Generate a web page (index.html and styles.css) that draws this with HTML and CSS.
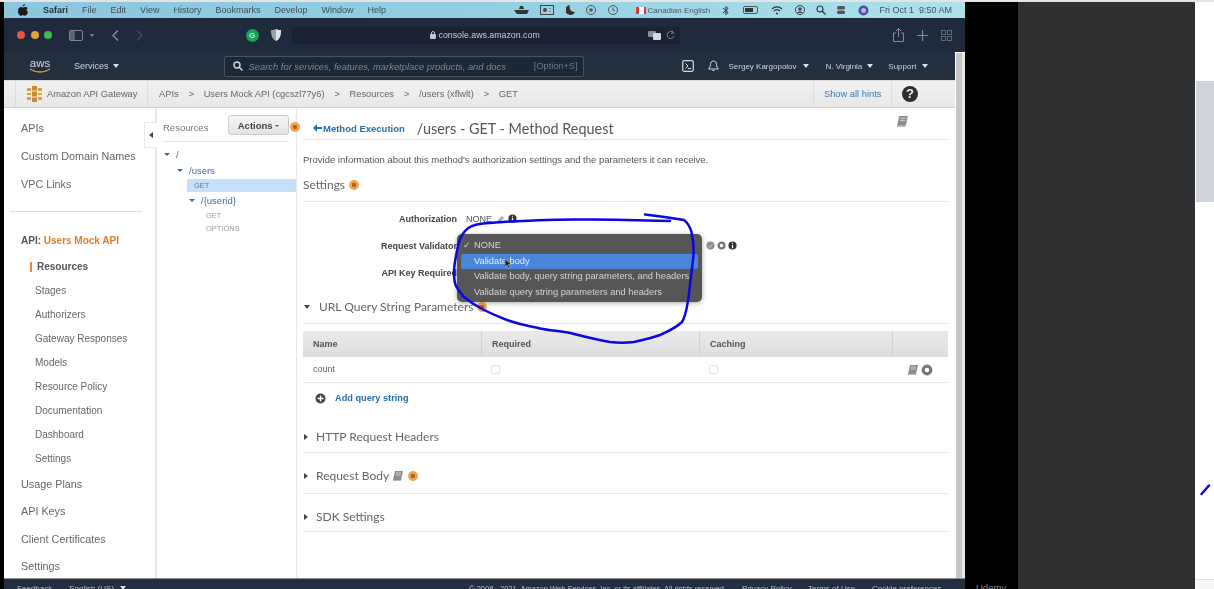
FILE: index.html
```html
<!DOCTYPE html>
<html lang="en">
<head>
    <meta charset="UTF-8">
    <meta name="viewport" content="width=device-width, initial-scale=1.0">
    <title>API Gateway - Method Request</title>
    <link rel="stylesheet" href="styles.css">
</head>
<body>

<svg class="defs" width="0" height="0">
    <symbol id="book" viewBox="0 0 12 12">
        <path d="M3 1h8l-2 9H1z" fill="#8d8d8d"/>
        <path d="M1 10h8v1H1z" fill="#bbb"/>
        <path d="M4 3h5M3.6 5h5" stroke="#ddd" stroke-width=".8"/>
    </symbol>
    <symbol id="info" viewBox="0 0 10 10">
        <circle cx="5" cy="5" r="4.5" fill="#333"/>
        <path d="M5 2v1M5 4.3V8" stroke="#fff" stroke-width="1.3"/>
    </symbol>
    <symbol id="ring" viewBox="0 0 10 10">
        <circle cx="5" cy="5" r="3.2" fill="none" stroke="#777" stroke-width="2.6"/>
    </symbol>
</svg>

<div class="top-strip"></div>
<div class="screen">
    <div class="edge"></div>

    <div class="frame">
        <div class="menubar">
            <svg class="apple" width="10" height="12" viewBox="0 0 10 12"><path d="M7 0c0 1.4-1 2.6-2.3 2.5C4.600 1.200 5.800.1 7 0zM9.700 4.100C8.200 5 8.300 7.400 10 8.100 9.500 9.600 8.400 11.800 7.200 11.800c-.9 0-1.200-.6-2.300-.6s-1.400.6-2.300.6C1.300 11.800 0 9.300 0 7c0-2.400 1.500-3.900 3-3.900 1 0 1.600.6 2.200.6.600 0 1.300-.7 2.500-.6.900 0 1.600.4 2 1z" fill="#1c1c1c"/></svg>
            <b class="menu-app">Safari</b>
            <span>File</span><span>Edit</span><span>View</span><span>History</span><span>Bookmarks</span><span>Develop</span><span>Window</span><span>Help</span>
            <div class="menu-right">
                <svg width="15" height="10" viewBox="0 0 15 10"><path d="M0 5h15l-2 4H3zM6 1h3l1 3H5z" fill="#333"/></svg>
                <svg class="mi-11" width="14" height="10" viewBox="0 0 14 10"><rect x=".5" y=".5" width="13" height="9" fill="none" stroke="#444"/><circle cx="5" cy="5" r="2" fill="#444"/><path d="M10 3v1M10 6v1" stroke="#444"/></svg>
                <svg class="mi-12" width="9" height="10" viewBox="0 0 9 10"><path d="M4 0a5 5 0 1 0 5 7A5 5 0 0 1 4 0z" fill="#333"/></svg>
                <svg class="mi-11" width="10" height="10" viewBox="0 0 10 10"><circle cx="5" cy="5" r="4.5" fill="none" stroke="#555"/><circle cx="5" cy="5" r="1.8" fill="#555"/></svg>
                <svg class="mi-12" width="10" height="10" viewBox="0 0 10 10"><circle cx="5" cy="5" r="4.5" fill="none" stroke="#555"/><path d="M5 2.500V5l2 1" fill="none" stroke="#555"/></svg>
                <span class="flag"></span>
                <span class="keyboard">Canadian English</span>
                <svg class="mi-14" width="6" height="11" viewBox="0 0 6 11"><path d="M0 3l5 4.500L3 9.500v-8l2 2L0 8" fill="none" stroke="#333"/></svg>
                <svg class="mi-14" width="17" height="8" viewBox="0 0 17 8"><rect x=".5" y=".5" width="14" height="7" rx="1.5" fill="none" stroke="#555"/><rect x="2" y="2" width="8" height="4" fill="#333"/></svg>
                <svg class="mi-11" width="12" height="9" viewBox="0 0 12 9"><path d="M1 3a7 7 0 0 1 10 0M3 5a4 4 0 0 1 6 0" fill="none" stroke="#333" stroke-width="1.2"/><circle cx="6" cy="7.5" r="1" fill="#333"/></svg>
                <svg class="mi-12" width="10" height="10" viewBox="0 0 10 10"><circle cx="5" cy="5" r="4.5" fill="none" stroke="#444"/><circle cx="5" cy="4" r="1.8" fill="#444"/><path d="M2 8a3.500 3.500 0 0 1 6 0" fill="#444"/></svg>
                <svg class="mi-11" width="10" height="10" viewBox="0 0 10 10"><circle cx="4" cy="4" r="3" fill="none" stroke="#333" stroke-width="1.2"/><path d="M6 6l3.500 3.500" stroke="#333" stroke-width="1.2"/></svg>
                <svg class="mi-10" width="10" height="10" viewBox="0 0 10 10"><rect x="1" y="1" width="8" height="3.5" rx="1.5" fill="#555"/><rect x="1" y="5.5" width="8" height="3.5" rx="1.5" fill="#555"/></svg>
                <svg class="mi-12" width="11" height="11" viewBox="0 0 11 11"><circle cx="5.5" cy="5.5" r="5" fill="#3557b5"/><circle cx="5.5" cy="5.5" r="2.5" fill="#e8a0b0"/></svg>
                <span class="clock">Fri Oct 1 &nbsp;9:50 AM</span>
            </div>
        </div>

        <div class="toolbar">
            <i class="light red"></i><i class="light yellow"></i><i class="light green"></i>
            <svg class="tb-side" width="14" height="11" viewBox="0 0 14 11"><rect x=".5" y=".5" width="13" height="10" rx="1.5" fill="none" stroke="#7d8591"/><path d="M5 1v9" stroke="#7d8591"/><rect x="1" y="1" width="4" height="9" fill="#5c6571"/></svg>
            <i class="tb-caret"></i>
            <svg class="tb-back" width="7" height="11" viewBox="0 0 7 11"><path d="M6 .5l-5 5 5 5" fill="none" stroke="#8b93a0" stroke-width="1.3"/></svg>
            <svg class="tb-fwd" width="7" height="11" viewBox="0 0 7 11"><path d="M1 .5l5 5-5 5" fill="none" stroke="#444e5e" stroke-width="1.3"/></svg>
            <span class="grammarly">G</span>
            <svg class="tb-shield" width="10" height="12" viewBox="0 0 10 12"><path d="M5 0c2 1 3 1 5 1 0 5-1 9-5 11C1 10 0 6 0 1c2 0 3 0 5-1z" fill="#9aa1ab"/><path d="M5 0c2 1 3 1 5 1 0 5-1 9-5 11z" fill="#dfe2e6"/></svg>
            <div class="address">
                <svg width="6" height="8" viewBox="0 0 6 8"><rect y="3" width="6" height="5" rx="1" fill="#c4c8ce"/><path d="M1.500 3V2a1.500 1.500 0 0 1 3 0v1" fill="none" stroke="#c4c8ce"/></svg>
                <span class="url">console.aws.amazon.com</span>
                <svg class="addr-tr" width="13" height="9" viewBox="0 0 13 9"><rect width="8" height="6" rx="1" fill="#8a909a"/><rect x="5" y="2" width="8" height="7" rx="1" fill="#d6d9dd"/></svg>
                <svg class="addr-re" width="9" height="10" viewBox="0 0 9 10"><path d="M7.500 3a3.500 3.500 0 1 0 .5 3M6 .5l1.500 2.500L5 3.500" fill="none" stroke="#7d8591"/></svg>
            </div>
            <svg class="tb-share" width="11" height="14" viewBox="0 0 11 14"><path d="M3 5H.5v8.500h10V5H8M5.500 9V.5M3 3l2.500-2.500L8 3" fill="none" stroke="#848c98"/></svg>
            <svg class="tb-plus" width="11" height="11" viewBox="0 0 11 11"><path d="M5.500 0v11M0 5.500h11" stroke="#848c98" stroke-width="1.2"/></svg>
            <svg class="tb-grid" width="11" height="11" viewBox="0 0 11 11"><g fill="none" stroke="#5f6875"><rect x=".5" y=".5" width="4" height="4"/><rect x="6.5" y=".5" width="4" height="4"/><rect x=".5" y="6.5" width="4" height="4"/><rect x="6.5" y="6.5" width="4" height="4"/></g></svg>
        </div>

        <div class="page">
            <div class="page-col">
                <div class="awsnav">
                    <div class="aws-logo">aws<svg width="22" height="5" viewBox="0 0 22 5"><path d="M1 1c6 4 14 4 20 0" fill="none" stroke="#e8962e" stroke-width="1.3"/></svg></div>
                    <span class="nav-services">Services</span><i class="nav-caret"></i>
                    <div class="nav-search">
                        <svg width="10" height="10" viewBox="0 0 10 10"><circle cx="4" cy="4" r="3" fill="none" stroke="#d5d8dc" stroke-width="1.4"/><path d="M6.300 6.300L9.500 9.500" stroke="#d5d8dc" stroke-width="1.5"/></svg>
                        <em>Search for services, features, marketplace products, and docs</em>
                        <span>[Option+S]</span>
                    </div>
                    <svg class="nav-shell" width="12" height="12" viewBox="0 0 12 12"><rect x=".7" y=".7" width="10.6" height="10.6" rx="1.5" fill="none" stroke="#d5d8dc" stroke-width="1.2"/><path d="M3.500 3.500L6 6 3.500 8.500M6 8.500h3" fill="none" stroke="#d5d8dc"/></svg>
                    <svg class="nav-bell" width="11" height="12" viewBox="0 0 11 12"><path d="M5.500 1C3.500 1 2.500 2.500 2.500 4.500c0 2-1 3.500-2 4.500h10c-1-1-2-2.500-2-4.500C8.500 2.500 7.500 1 5.500 1z" fill="none" stroke="#d5d8dc"/><path d="M4.500 10.500h2" stroke="#d5d8dc"/></svg>
                    <span class="nav-user">Sergey Kargopolov</span><i class="nav-caret"></i>
                    <span class="nav-region">N. Virginia</span><i class="nav-caret"></i>
                    <span class="nav-support">Support</span><i class="nav-caret"></i>
                </div>

                <div class="crumbs">
                    <div class="crumb-service">
                        <svg width="15" height="16" viewBox="0 0 15 16"><path d="M5 0h5v16H5z" fill="#c98a2e"/><path d="M0 2h4v3H0zM11 2h4v3h-4zM0 7h4v2H0zM11 7h4v2h-4zM0 11h4v3H0zM11 11h4v3h-4z" fill="#d9a04a"/><path d="M5 5h5M5 11h5" stroke="#f3e3c4"/></svg>
                        <span>Amazon API Gateway</span>
                    </div>
                    <div class="crumb-path">
                        <span>APIs</span><s>&gt;</s><span>Users Mock API (cgcszl77y6)</span><s>&gt;</s><span>Resources</span><s>&gt;</s><span>/users (xflwlt)</span><s>&gt;</s><span>GET</span>
                    </div>
                    <a class="hints">Show all hints</a>
                    <div class="help">?</div>
                </div>

                <div class="content">
                    <nav class="sidebar">
                        <a class="side-main">APIs</a>
                        <a class="side-main">Custom Domain Names</a>
                        <a class="side-main side-vpc">VPC Links</a>
                        <hr class="side-rule">
                        <div class="side-api">API: <span>Users Mock API</span></div>
                        <a class="side-sub active">Resources</a>
                        <a class="side-sub">Stages</a>
                        <a class="side-sub">Authorizers</a>
                        <a class="side-sub">Gateway Responses</a>
                        <a class="side-sub">Models</a>
                        <a class="side-sub">Resource Policy</a>
                        <a class="side-sub">Documentation</a>
                        <a class="side-sub">Dashboard</a>
                        <a class="side-sub">Settings</a>
                        <a class="side-main side-tail">Usage Plans</a>
                        <a class="side-main side-tail">API Keys</a>
                        <a class="side-main side-tail">Client Certificates</a>
                        <a class="side-main side-tail">Settings</a>
                        <div class="collapse-tab"></div>
                    </nav>

                    <div class="resources">
                        <div class="res-head">
                            <span>Resources</span>
                            <button class="actions">Actions <i></i></button>
                            <i class="badge res-badge"></i>
                        </div>
                        <div class="tree tree-root"><i class="tri"></i>/</div>
                        <div class="tree tree-users"><i class="tri"></i>/users</div>
                        <div class="tree-method selected">GET</div>
                        <div class="tree tree-id"><i class="tri"></i>/{userid}</div>
                        <div class="tree-method sub">GET</div>
                        <div class="tree-method sub muted">OPTIONS</div>
                    </div>

                    <main class="main">
                        <header class="main-head">
                            <a class="back"><svg width="9" height="8" viewBox="0 0 9 8"><path d="M4 0L0 4l4 4V5h5V3H4z" fill="#1f6fb2"/></svg>Method Execution</a>
                            <h1>/users - GET - Method Request</h1>
                            <svg class="head-book" width="13" height="13"><use href="#book"/></svg>
                        </header>
                        <p class="desc">Provide information about this method's authorization settings and the parameters it can receive.</p>

                        <h2 class="sec sec-settings">Settings <i class="badge"></i></h2>
                        <div class="form">
                            <div class="form-row">
                                <label>Authorization</label>
                                <span>NONE</span>
                                <svg class="pencil" width="8" height="8" viewBox="0 0 8 8"><path d="M0 8l1-3 4-4 2 2-4 4z" fill="#aaa"/></svg>
                                <svg width="9" height="9"><use href="#info"/></svg>
                            </div>
                            <div class="form-row">
                                <label>Request Validator</label>
                                <div class="row-icons">
                                    <svg width="9" height="9" viewBox="0 0 10 10"><circle cx="5" cy="5" r="4.5" fill="#8c8c8c"/><path d="M2.500 5l2 2 3-4" fill="none" stroke="#ccc"/></svg>
                                    <svg width="9" height="9"><use href="#ring"/></svg>
                                    <svg width="9" height="9"><use href="#info"/></svg>
                                </div>
                            </div>
                            <div class="form-row">
                                <label>API Key Required</label>
                            </div>
                        </div>

                        <h2 class="sec sec-url"><i class="tri-down"></i>URL Query String Parameters <i class="badge"></i></h2>

                        <div class="table">
                            <div class="t-row t-head">
                                <div class="c-name">Name</div>
                                <div class="c-req">Required</div>
                                <div class="c-cache">Caching</div>
                                <div class="c-tools"></div>
                            </div>
                            <div class="t-row t-body">
                                <div class="c-name">count</div>
                                <div class="c-req"><i class="check"></i></div>
                                <div class="c-cache"><i class="check"></i></div>
                                <div class="c-tools">
                                    <svg width="12" height="12"><use href="#book"/></svg>
                                    <svg width="12" height="12"><use href="#ring"/></svg>
                                </div>
                            </div>
                        </div>
                        <div class="add-row">
                            <svg width="11" height="11" viewBox="0 0 11 11"><circle cx="5.5" cy="5.5" r="5" fill="#444"/><path d="M5.500 2.500v6M2.500 5.500h6" stroke="#fff" stroke-width="1.4"/></svg>
                            <a>Add query string</a>
                        </div>

                        <h2 class="sec sec-fold sec-http"><i class="tri-right"></i>HTTP Request Headers</h2>
                        <h2 class="sec sec-fold sec-body"><i class="tri-right"></i>Request Body <svg width="12" height="12"><use href="#book"/></svg> <i class="badge"></i></h2>
                        <h2 class="sec sec-fold sec-sdk"><i class="tri-right"></i>SDK Settings</h2>

                        <div class="dropdown">
                            <div class="dd-item"><span class="tick">&#10003;</span>NONE</div>
                            <div class="dd-item on">Validate body</div>
                            <div class="dd-item">Validate body, query string parameters, and headers</div>
                            <div class="dd-item">Validate query string parameters and headers</div>
                            <svg class="pointer" width="7" height="10" viewBox="0 0 7 10"><path d="M0 0v8l2-2 1.500 3.500 1.500-.7L3.500 5.500H6.500z" fill="#222" stroke="#ccc" stroke-width=".5"/></svg>
                        </div>
                    </main>
                </div>
            </div>
            <div class="scrollbar"></div>
        </div>

        <footer class="footer">
            <span class="f-feedback">Feedback</span>
            <span class="f-lang">English (US)</span><i class="nav-caret"></i>
            <span class="f-copy">&copy; 2008 - 2021, Amazon Web Services, Inc. or its affiliates. All rights reserved.</span>
            <span class="f-privacy">Privacy Policy</span>
            <span class="f-terms">Terms of Use</span>
            <span>Cookie preferences</span>
        </footer>
    </div>

    <div class="black-col"><span>Udemy</span></div>
    <div class="gray-col"></div>
    <div class="side-col">
        <div class="sc-white"></div>
        <div class="sc-gray"></div>
        <div class="sc-low"></div>
        <div class="sc-foot"></div>
    </div>
</div>

<!-- pen marks drawn over the video -->
<svg class="ink" width="1214" height="589" viewBox="0 0 1214 589">
    <path d="M670 221C640 220 606 219 575 219.500C540 220 510 221 483 223.500C474 224.500 468 227 465 231C461 236 459 240 458 246C456 256 454 264 454 272C454 278 454 282 456 286C458 290 460 293 464 297C470 302 476 306 484 310C492 314 499 317 507 320C518 324 529 326 540 328.500C552 331 563 331 574 334C586 337 598 340 610 342C618 343 626 343 634 342C643 340 652 338 660 335C669 331 676 328 682 322C686 316 687 306 688.500 298C690 284 692 270 693.500 255C694 247 693 239 691.500 232C690 227 688 223 684 220C672 218 658 216 645 214.500" fill="none" stroke="#0808e0" stroke-width="2.5" stroke-linecap="round"/>
    <path d="M1201.500 494L1209 485.500" fill="none" stroke="#0808e0" stroke-width="2.5" stroke-linecap="round"/>
</svg>

</body>
</html>
```

FILE: styles.css
```css
* {
    box-sizing: border-box;
}
html, body {
    margin: 0;
    height: 589px;
    overflow: hidden;
}
body {
    position: relative;
    width: 1214px;
    background: #e4e4e4;
    font-family: "Liberation Sans", Arial, sans-serif;
    color: #555;
}
.defs {
    position: absolute;
}
.top-strip {
    height: 2px;
}
.screen {
    display: flex;
    height: 587px;
}
.edge {
    width: 4px;
    background: #000;
}

/* video frame */
.frame {
    width: 961px;
    display: flex;
    flex-direction: column;
    overflow: hidden;
    filter: blur(.45px);
    background: #fff;
}

.menubar {
    height: 16px;
    flex: none;
    display: flex;
    align-items: center;
    padding: 0 13px 0 14px;
    background: linear-gradient(90deg, #8cc6df, #93cfe2 50%, #aee2ea);
    font-size: 9px;
    color: #3d4f5b;
}
.menubar svg {
    flex: none;
}
.menubar > span {
    margin-right: 14px;
}
.menu-app {
    margin: 0 14px 0 15px;
    color: #26333c;
}
.menu-right {
    margin-left: auto;
    display: flex;
    align-items: center;
}
.mi-10 { margin-left: 10px; }
.mi-11 { margin-left: 11px; }
.mi-12 { margin-left: 12px; }
.mi-14 { margin-left: 14px; }
.flag {
    margin-left: 18px;
    width: 10px;
    height: 7px;
    background: linear-gradient(90deg, #d33 25%, #fff 25%, #fff 75%, #d33 75%);
}
.keyboard {
    margin-left: 1px;
    width: 62px;
    font-size: 8px;
    white-space: nowrap;
    color: #4a5a68;
}
.clock {
    margin-left: 10px;
    white-space: nowrap;
}

.toolbar {
    height: 34px;
    flex: none;
    display: flex;
    align-items: center;
    padding-left: 13px;
    background: #1f2a3d;
}
.light {
    width: 8px;
    height: 8px;
    border-radius: 50%;
    margin-right: 5.5px;
}
.red { background: #e8524a; }
.yellow { background: #e6a532; }
.green { background: #3dbb4c; }
.tb-side {
    margin-left: 11px;
}
.tb-caret {
    margin-left: 7px;
    border: 2.5px solid transparent;
    border-top: 3px solid #7d8591;
    border-bottom: 0;
}
.tb-back {
    margin-left: 18px;
}
.tb-fwd {
    margin-left: 17px;
}
.grammarly {
    margin-left: 103px;
    width: 13px;
    height: 13px;
    border-radius: 50%;
    background: #16a35a;
    color: #bff0d4;
    font-size: 8px;
    font-weight: bold;
    text-align: center;
    line-height: 13px;
}
.tb-shield {
    margin-left: 12px;
}
.address {
    margin-left: 11px;
    width: 388px;
    height: 17px;
    display: flex;
    align-items: center;
    padding-left: 138px;
    background: #1a2233;
    border-radius: 3px;
}
.url {
    margin-left: 3px;
    font-size: 8.8px;
    color: #c9cdd3;
    white-space: nowrap;
}
.addr-tr {
    margin-left: 108px;
}
.addr-re {
    margin-left: 5px;
}
.tb-share {
    margin-left: 213px;
}
.tb-plus {
    margin-left: 13px;
}
.tb-grid {
    margin-left: 13px;
}

.page {
    flex: 1;
    display: flex;
    min-height: 0;
}
.page-col {
    width: 951px;
    display: flex;
    flex-direction: column;
}
.scrollbar {
    width: 10px;
    margin-top: 1px;
    background: linear-gradient(90deg, #fff 0 1px, #c6c6c6 1px 7px, #e8e8e8 7px);
}

/* aws console header */
.awsnav {
    height: 28px;
    flex: none;
    display: flex;
    align-items: center;
    padding-left: 25px;
    background: #232f3e;
    font-size: 8px;
    color: #cfd3d8;
}
.aws-logo {
    width: 22px;
    font-size: 11.5px;
    line-height: 9px;
    color: #d8dbdf;
    text-align: center;
}
.aws-logo svg {
    display: block;
}
.nav-services {
    margin-left: 23px;
    font-size: 9px;
}
.nav-caret {
    margin-left: 4px;
    flex: none;
    border: 3px solid transparent;
    border-top: 4px solid #dde0e3;
    border-bottom: 0;
}
.nav-search {
    margin-left: 105px;
    width: 360px;
    height: 21px;
    display: flex;
    align-items: center;
    padding: 0 5px 0 8px;
    border: 1px solid #46525f;
    border-radius: 2px;
    background: #1c2634;
}
.nav-search em {
    margin-left: 6px;
    font-size: 9.4px;
    color: #7f8894;
    white-space: nowrap;
}
.nav-search span {
    margin-left: auto;
    font-size: 9.2px;
    color: #6f7986;
}
.nav-shell {
    margin-left: 98px;
}
.nav-bell {
    margin-left: 14px;
}
.nav-user {
    margin-left: 10px;
    white-space: nowrap;
}
.nav-user + .nav-caret {
    margin-left: 6px;
}
.nav-region {
    margin-left: 17px;
    white-space: nowrap;
}
.nav-region + .nav-caret {
    margin-left: 5px;
}
.nav-support {
    margin-left: 15px;
}
.nav-support + .nav-caret {
    margin-left: 6px;
}

.crumbs {
    height: 28px;
    flex: none;
    display: flex;
    align-items: stretch;
    padding-left: 11px;
    background: linear-gradient(#f1f1f1, #e8e8e8);
    border-top: 1px solid #d8d8d8;
    border-bottom: 1px solid #d4d4d4;
    font-size: 9.3px;
    color: #666;
}
.crumb-service {
    width: 133px;
    display: flex;
    align-items: center;
    padding-left: 11px;
    border-left: 1px solid #ddd;
    border-right: 1px solid #ddd;
}
.crumb-service span {
    margin-left: 5px;
    white-space: nowrap;
}
.crumb-path {
    width: 665px;
    display: flex;
    align-items: center;
    padding-left: 11px;
    white-space: nowrap;
}
.crumb-path s {
    margin: 0 9px 0 10px;
    width: 6px;
    text-decoration: none;
}
.hints {
    width: 79px;
    padding-left: 10px;
    line-height: 26px;
    color: #3a78b8;
    border-left: 1px solid #ddd;
    border-right: 1px solid #ddd;
    white-space: nowrap;
}
.help {
    margin: 5px 0 0 10px;
    width: 16px;
    height: 16px;
    border-radius: 50%;
    background: #2e2e2e;
    color: #eee;
    font-size: 13px;
    font-weight: bold;
    line-height: 16px;
    text-align: center;
}

/* three panels */
.content {
    flex: 1;
    display: flex;
    min-height: 0;
}
.sidebar {
    position: relative;
    width: 153px;
    flex: none;
    padding-top: 7px;
    border-right: 2px solid #e8e8e8;
    font-size: 10.8px;
    color: #666;
}
.sidebar a {
    display: block;
}
.side-main {
    height: 27.5px;
    line-height: 27.5px;
    padding-left: 17px;
    white-space: nowrap;
}
.side-vpc {
    margin-top: 1px;
}
.side-tail {
    height: 27.3px;
    line-height: 27.3px;
}
.side-rule {
    margin: 12.5px 13px 0 6px;
    border: 0;
    border-top: 1px solid #ddd;
}
.side-api {
    height: 29px;
    line-height: 29px;
    margin-top: 14px;
    padding-left: 17px;
    font-size: 10px;
    font-weight: bold;
    color: #555;
}
.side-api span {
    color: #e07b2c;
}
.side-sub {
    height: 24px;
    line-height: 24px;
    padding-left: 31px;
    font-size: 10px;
}
.side-sub.active {
    position: relative;
    padding-left: 33px;
    font-weight: bold;
    color: #555;
}
.side-sub.active::before {
    content: "";
    position: absolute;
    left: 26px;
    top: 7px;
    width: 2px;
    height: 10px;
    background: #e8873a;
}
.collapse-tab {
    position: absolute;
    right: -2px;
    top: 14px;
    width: 13px;
    height: 26px;
    background: #fff;
    border: 1px solid #e8e8e8;
    border-right: 0;
}
.collapse-tab::after {
    content: "";
    position: absolute;
    left: 4px;
    top: 9px;
    border: 3px solid transparent;
    border-right: 4px solid #444;
    border-left: 0;
}

.resources {
    width: 140px;
    flex: none;
    padding-left: 6px;
    border-right: 1px solid #e8e8e8;
    font-size: 9.5px;
}
.res-head {
    position: relative;
    height: 34px;
    width: 126px;
    margin-bottom: 3px;
    display: flex;
    align-items: flex-start;
    justify-content: space-between;
    padding-top: 7px;
    border-bottom: 1px solid #e4e4e4;
    color: #777;
}
.res-head span {
    margin-top: 7px;
}
.actions {
    width: 61px;
    height: 20px;
    padding: 0;
    border: 1px solid #ccc;
    border-radius: 3px;
    background: linear-gradient(#f5f5f5, #e4e4e4);
    font: bold 9.5px "Liberation Sans", Arial, sans-serif;
    color: #444;
}
.actions i {
    display: inline-block;
    vertical-align: middle;
    border: 2px solid transparent;
    border-top: 2px solid #555;
    border-bottom: 0;
}
.res-badge {
    position: absolute;
    left: 127px;
    top: 14px;
}
.tree {
    display: flex;
    align-items: center;
    height: 16px;
    color: #3c6ea5;
}
.tri {
    margin-right: 6px;
    border: 3px solid transparent;
    border-top: 3.5px solid #2e6ca8;
    border-bottom: 0;
}
.tree-root {
    margin: 4px 0 0 1px;
}
.tree-users {
    margin-left: 14px;
}
.tree-id {
    margin: 0 0 0 26px;
    height: 17px;
}
.tree-method {
    padding-left: 7px;
    font-size: 7.5px;
}
.selected {
    margin-left: 24px;
    height: 13px;
    margin-top: 1px;
    line-height: 13px;
    background: #c7dff8;
    color: #5d7a99;
}
.sub {
    margin-left: 36px;
    height: 13px;
    line-height: 13px;
    color: #8aa0b8;
}
.muted {
    color: #999;
}

.badge {
    display: inline-block;
    flex: none;
    width: 10px;
    height: 10px;
    border-radius: 50%;
    background: radial-gradient(circle, #b4611a 0 2px, #f2a351 2.5px);
}

/* method request panel */
.main {
    position: relative;
    flex: 1;
    min-width: 0;
    padding: 0 7px 0 6px;
}
.main-head {
    position: relative;
    height: 32px;
    display: flex;
    align-items: center;
    padding: 13px 0 4px 10px;
    border-bottom: 1px solid #e6e6e6;
}
.back {
    display: flex;
    align-items: center;
    gap: 1px;
    font-size: 9.5px;
    font-weight: bold;
    color: #2a6ea8;
    white-space: nowrap;
}
.main-head h1 {
    margin: 0 0 0 12px;
    font: 400 14.4px Lato, sans-serif;
    color: #555;
    white-space: nowrap;
}
.head-book {
    position: absolute;
    right: 39px;
    top: 7px;
}
.desc {
    margin: 0;
    padding-top: 13px;
    height: 36px;
    font-size: 9.5px;
    line-height: 13px;
    color: #555;
    white-space: nowrap;
}
.sec {
    margin: 0;
    height: 18px;
    box-sizing: content-box;
    display: flex;
    align-items: center;
    gap: 4px;
    border-bottom: 1px solid #e6e6e6;
    font: 400 12px/18px Lato, sans-serif;
    color: #666;
    white-space: nowrap;
}
.sec-settings {
    padding-bottom: 7px;
}
.form {
    padding-top: 3px;
    height: 96px;
}
.form-row {
    height: 27px;
    display: flex;
    align-items: center;
    font-size: 9px;
}
.form-row label {
    width: 154px;
    text-align: right;
    margin-right: 9px;
    font-weight: bold;
    color: #444;
}
.pencil {
    margin: 0 3px 0 5px;
}
.row-icons {
    margin-left: 240px;
    display: flex;
    gap: 2px;
}
.sec-url {
    padding-bottom: 7px;
}
.tri-down {
    margin: 0 5px 0 1px;
    border: 3.5px solid transparent;
    border-top: 4px solid #444;
    border-bottom: 0;
}
.tri-right {
    margin: 0 8px 0 1px;
    border: 3px solid transparent;
    border-left: 4px solid #444;
    border-right: 0;
}
.table {
    margin-top: 7px;
    font-size: 9px;
}
.t-row {
    display: flex;
}
.t-row > div {
    padding-left: 10px;
}
.c-name { width: 178px; }
.c-req { width: 218px; }
.c-cache { width: 193px; }
.c-tools { flex: 1; }
.t-head {
    height: 26px;
    line-height: 26px;
    background: linear-gradient(#eaeaea, #dedede);
    font-weight: bold;
    color: #555;
}
.t-head > div + div {
    border-left: 1px solid #d2d2d2;
}
.t-body {
    height: 26px;
    line-height: 25px;
    border-bottom: 1px solid #e6e6e6;
    color: #666;
}
.check {
    display: inline-block;
    vertical-align: middle;
    width: 9px;
    height: 9px;
    border: 1px solid #e2e2e2;
    border-radius: 2px;
}
.t-row .c-tools {
    display: flex;
    align-items: center;
    justify-content: flex-end;
    gap: 2px;
    padding-right: 15px;
}
.add-row {
    height: 30px;
    display: flex;
    align-items: center;
    padding-left: 12px;
    gap: 9px;
    font-size: 9.2px;
    font-weight: bold;
    color: #2a6ea8;
}
.sec-fold {
    gap: 0;
}
.sec-fold svg {
    margin: 0 4px 0 3px;
}
.sec-http {
    margin-top: 15px;
    padding-bottom: 6px;
}
.sec-body {
    margin-top: 14px;
    padding-bottom: 8px;
}
.sec-sdk {
    margin-top: 14px;
    padding-bottom: 5px;
}

.dropdown {
    position: absolute;
    left: 160px;
    top: 126px;
    width: 245px;
    height: 68px;
    padding: 4px 4px;
    border-radius: 5px;
    background: #565656;
    box-shadow: 0 1px 5px rgba(0, 0, 0, .35);
    font-size: 9.3px;
    color: #d4d4d4;
}
.dd-item {
    position: relative;
    height: 15.5px;
    line-height: 15.5px;
    padding-left: 13px;
    border-radius: 2px;
    white-space: nowrap;
    overflow: hidden;
}
.dd-item.on {
    background: #4a86da;
    color: #e4edf9;
}
.tick {
    position: absolute;
    left: 2px;
}
.pointer {
    position: absolute;
    left: 48px;
    top: 25px;
}

.footer {
    height: 11px;
    flex: none;
    display: flex;
    align-items: flex-start;
    padding: 5px 0 0 13px;
    background: #232f3e;
    border-top: 1px solid #8b919a;
    font-size: 8px;
    line-height: 9px;
    color: #b8bdc4;
    white-space: nowrap;
}
.f-lang {
    margin-left: 17px;
}
.f-lang + .nav-caret {
    margin-top: 2px;
    margin-left: 6px;
}
.f-copy {
    margin-left: 343px;
    width: 273px;
    font-size: 7.5px;
}
.f-privacy {
    width: 66px;
}
.f-terms {
    width: 64px;
}

/* rest of the shared desktop */
.black-col {
    position: relative;
    width: 53px;
    background: #000;
}
.black-col span {
    position: absolute;
    left: 11px;
    bottom: -4px;
    font-size: 9.5px;
    color: #8a8a8a;
}
.gray-col {
    width: 177px;
    background: #2f3032;
}
.side-col {
    flex: 1;
    display: flex;
    flex-direction: column;
    background: #fff;
}
.sc-white {
    height: 80px;
    flex: none;
    margin-left: 1px;
    border-bottom: 1px solid #cdd1d8;
}
.sc-gray {
    height: 120px;
    flex: none;
    margin-left: 1px;
    background: #d1d5db;
}
.sc-low {
    flex: 1;
}
.sc-foot {
    height: 10px;
    flex: none;
    background: #f8f8f8;
    border-top: 1px solid #dcdcdc;
}

.ink {
    position: absolute;
    left: 0;
    top: 0;
    pointer-events: none;
}
```
